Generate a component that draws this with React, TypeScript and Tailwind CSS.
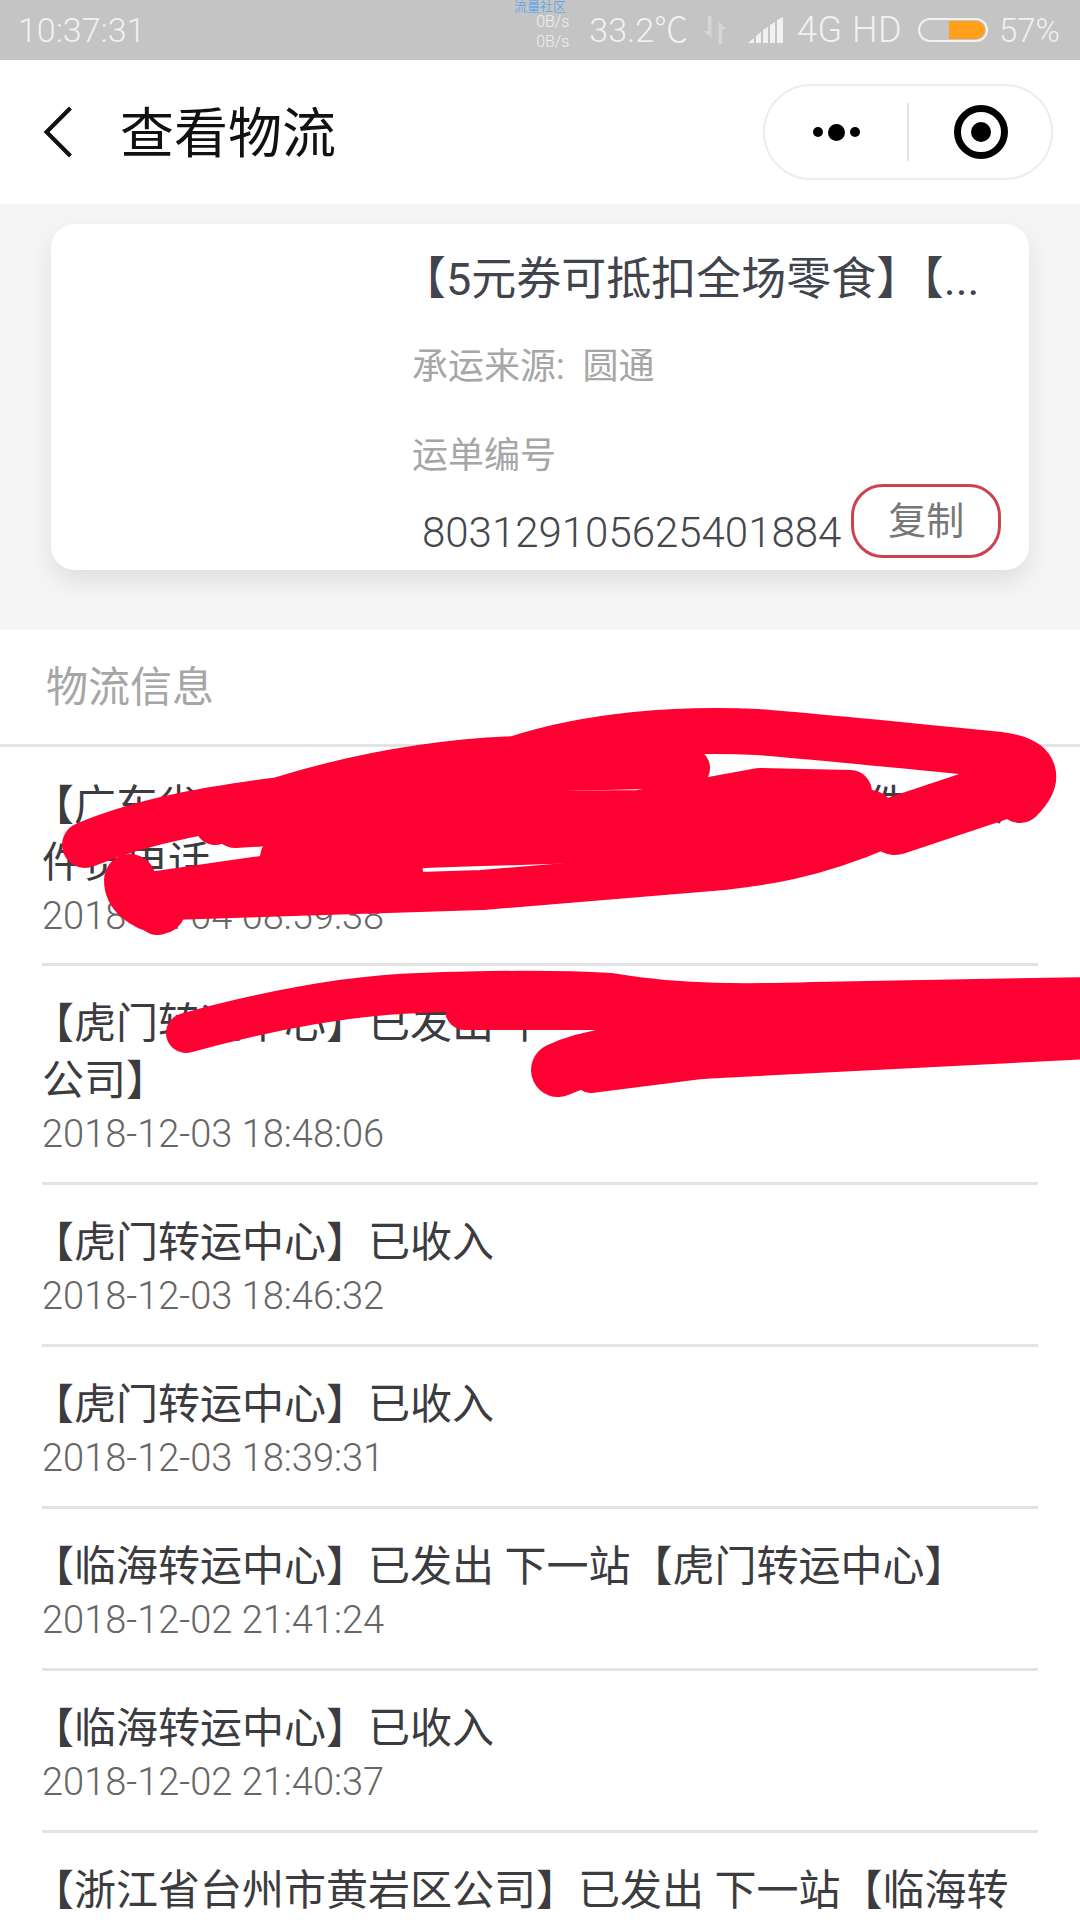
const font = "font-['Roboto','Noto_Sans_CJK_SC',sans-serif]";

const items = [
  { lines: ["【虎门转运中心】已收入"], time: "2018-12-03 18:46:32" },
  { lines: ["【虎门转运中心】已收入"], time: "2018-12-03 18:39:31" },
  { lines: ["【临海转运中心】已发出 下一站【虎门转运中心】"], time: "2018-12-02 21:41:24" },
  { lines: ["【临海转运中心】已收入"], time: "2018-12-02 21:40:37" },
];

const TrackItem = ({ lines, time }: { lines: string[]; time: string }) => (
  <div className="mx-[42px] border-b-[3px] border-[#e3e3e3] pt-[29px] pb-[23px]">
    {lines.map((line) => (
      <p
        key={line}
        className={
          line.startsWith("【")
            ? "-ml-[10px] text-[42px] leading-[57px] text-[#3c3c40] whitespace-nowrap"
            : "text-[42px] leading-[57px] text-[#3c3c40] whitespace-nowrap"
        }
      >
        {line}
      </p>
    ))}
    <p className="text-[38px] leading-[50px] font-light text-[#666]">{time}</p>
  </div>
);

const StatusBar = () => (
  <div className="relative flex h-[60px] items-center justify-between bg-[#c4c4c4] pl-[18px] pr-[20px] font-light text-[#f1f1f1]">
    <span className="text-[34px] leading-none">10:37:31</span>
    <span className="absolute left-[514px] top-0 text-[13px] leading-[14px] text-[#3f9cf0]">流量社区</span>
    <div className="flex items-center">
      <div className="mr-[20px] flex flex-col items-end pt-[4px] text-[16px] leading-[20px]">
        <span>0B/s</span>
        <span>0B/s</span>
      </div>
      <span className="text-[34px] leading-none">33.2℃</span>
      <svg className="ml-[14px]" width="26" height="30" viewBox="0 0 22 30" preserveAspectRatio="none" fill="#d6d6d6">
        <path d="M8 1v22l-7-7h4V1zM14 29V7l7 7h-4v15z" />
      </svg>
      <svg className="ml-[20px]" width="36" height="26" viewBox="0 0 36 26" fill="#f1f1f1">
        <path d="M0 26l6-5v5zM8 19l5-4v11H8zM15 13l5-3v16h-5zM22 8l5-3v21h-5zM29 3l6-3v26h-6z" />
      </svg>
      <span className="ml-[13px] text-[36px] leading-none tracking-[0.5px]">4G HD</span>
      <div className="ml-[16px] flex h-[24px] w-[70px] justify-end rounded-full border-2 border-[#f1f1f1] p-[1px]">
        <div className="h-full w-[36px] rounded-r-full rounded-l-[2px] bg-[#ff9f1a]" />
      </div>
      <span className="ml-[11px] text-[33px] leading-none">57%</span>
    </div>
  </div>
);

const NavBar = () => (
  <div className="flex h-[144px] items-center bg-white pl-[42px] pr-[27px]">
    <svg width="32" height="52" viewBox="0 0 30 50" fill="none" stroke="#111" strokeWidth="4">
      <path d="M27 2L4 25l23 23" />
    </svg>
    <h1 className="ml-[46px] pt-[6px] text-[54px] leading-none text-[#111]">查看物流</h1>
    <div className="ml-auto flex h-[96px] w-[290px] items-center rounded-full border-2 border-[#ececec]">
      <div className="flex w-[142px] items-center justify-center gap-[5px]">
        <span className="h-[10px] w-[10px] rounded-full bg-black" />
        <span className="h-[17px] w-[17px] rounded-full bg-black" />
        <span className="h-[10px] w-[10px] rounded-full bg-black" />
      </div>
      <div className="h-[58px] w-[2px] bg-[#e2e2e2]" />
      <div className="flex flex-1 items-center justify-center">
        <div className="ml-[2px] flex h-[54px] w-[54px] items-center justify-center rounded-full border-[7px] border-black">
          <span className="h-[20px] w-[20px] rounded-full bg-black" />
        </div>
      </div>
    </div>
  </div>
);

const ShipmentCard = () => (
  <div className="bg-[#f5f5f5] px-[51px] pt-[20px] pb-[60px]">
    <div className="h-[346px] rounded-[24px] bg-white pl-[359px] pr-[22px] pt-[30px] shadow-[0_12px_24px_rgba(0,0,0,0.09)]">
      <p className="-ml-[9px] text-[45px] leading-[52px] text-[#42444d] whitespace-nowrap">【5元券可抵扣全场零食】【...</p>
      <p className="mt-[36px] ml-[2px] text-[36px] leading-[50px] text-[#a6a6a6]">承运来源:&nbsp; 圆通</p>
      <p className="mt-[39px] ml-[2px] text-[36px] leading-[50px] text-[#a6a6a6]">运单编号</p>
      <div className="mt-[3px] flex items-end">
        <span className="ml-[12px] text-[42px] leading-[50px] font-light text-[#45474d]">803129105625401884</span>
        <button className="ml-[10px] flex h-[74px] w-[150px] items-center justify-center rounded-[32px] border-[3px] border-[#c9444f] text-[38px] text-[#777]">
          复制
        </button>
      </div>
    </div>
  </div>
);

const Scribbles = () => (
  <svg className="absolute left-0 top-0" width="1080" height="1920" viewBox="0 0 1080 1920" fill="none" stroke="#ff0033" strokeLinecap="round" strokeLinejoin="round">
    <path strokeWidth="46" d="M85 845C150 818 220 808 280 800C360 775 440 762 516 759C590 735 680 728 757 732C800 735 900 745 1000 755C1040 760 1040 780 1020 800" />
    <path strokeWidth="58" d="M1018 785L895 826" />
    <path strokeWidth="40" d="M885 828C810 860 760 866 723 870L482 890L170 900L157 915" />
    <path strokeWidth="52" d="M130 880C130 895 145 905 160 908" />
    <path strokeWidth="40" d="M215 825C340 795 430 778 520 772L690 768" />
    <path strokeWidth="44" d="M235 826L434 814L640 812L760 790L850 792" />
    <path strokeWidth="50" d="M285 858C350 845 430 842 520 840L640 836L870 815" />
    <path strokeWidth="46" d="M150 895L262 879L400 872" />
    <path strokeWidth="40" d="M640 868L800 850" />
    <path strokeWidth="40" d="M186 1033C270 1010 350 995 420 993C500 990 560 990 610 993C680 1005 750 1004 813 1002L1090 997" />
    <path strokeWidth="40" d="M465 1010L1090 1010" />
    <path strokeWidth="54" d="M558 1070C590 1055 620 1052 700 1052L1090 1032" />
    <path strokeWidth="30" d="M590 1078L716 1062L1090 1040" />
  </svg>
);

export default function App() {
  return (
    <div className={`relative h-[1920px] w-[1080px] overflow-hidden bg-white ${font}`}>
      <StatusBar />
      <NavBar />
      <ShipmentCard />
      <div className="flex h-[117px] items-center border-b-[3px] border-[#e3e3e3] pl-[46px] pt-[1px] text-[42px] text-[#a6a6a6]">
        物流信息
      </div>
      {/* 第一条被涂掉了，只留露出来的字 */}
      <div className="mx-[42px] h-[219px] border-b-[3px] border-[#e3e3e3] pt-[30px]">
        <div className="-ml-[10px] flex justify-between text-[42px] leading-[57px] text-[#3c3c40] whitespace-nowrap">
          <span>【广东省</span>
          <span className="mr-[35px]">件中 收</span>
        </div>
        <p className="text-[42px] leading-[57px] text-[#3c3c40]">件员电话</p>
        <p className="text-[38px] leading-[50px] font-light text-[#666]">2018-12-04 08:59:38</p>
      </div>
      <TrackItem lines={["【虎门转运中心】已发出 下一站", "公司】"]} time="2018-12-03 18:48:06" />
      {items.map((item) => (
        <TrackItem key={item.time} {...item} />
      ))}
      <div className="ml-[32px] pt-[29px] text-[42px] leading-[57px] text-[#3c3c40] whitespace-nowrap">
        【浙江省台州市黄岩区公司】已发出 下一站【临海转
      </div>
      <Scribbles />
    </div>
  );
}
